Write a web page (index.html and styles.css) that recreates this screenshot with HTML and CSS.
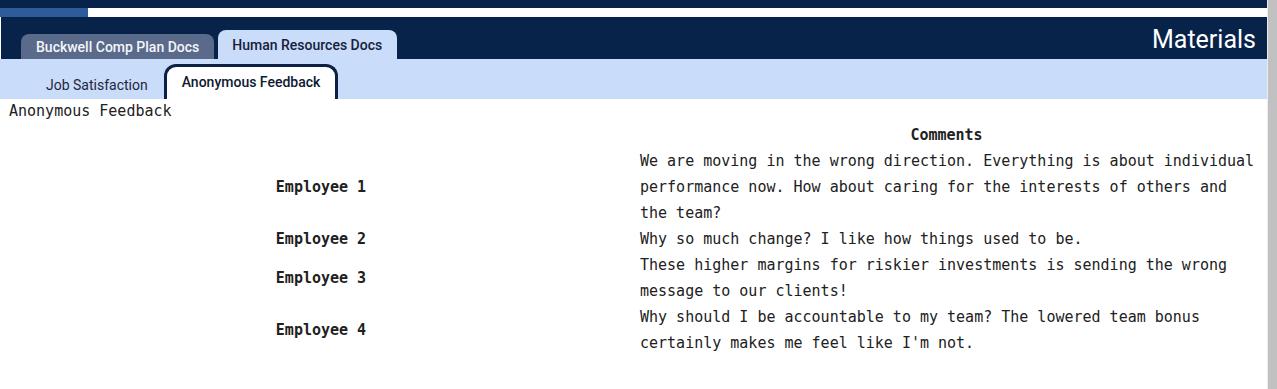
FILE: index.html
```html
<!DOCTYPE html>
<html lang="en">
<head>
    <meta charset="UTF-8">
    <meta name="viewport" content="width=device-width, initial-scale=1.0">
    <title>Materials</title>
    <link rel="stylesheet" href="styles.css">
</head>
<body>
    <div class="page">
        <main class="main">
            <div class="topbar"></div>
            <div class="progress">
                <div class="progress-fill"></div>
            </div>

            <header class="header">
                <div class="tabs">
                    <a class="tab">Buckwell Comp Plan Docs</a>
                    <a class="tab active">Human Resources Docs</a>
                </div>
                <h1 class="title">Materials</h1>
            </header>

            <nav class="subtabs">
                <a class="subtab">Job Satisfaction</a>
                <a class="subtab active">Anonymous Feedback</a>
            </nav>

            <section class="content">
                <div class="doc-title">Anonymous Feedback</div>
                <table class="feedback">
                    <thead>
                        <tr>
                            <th class="name-col"></th>
                            <th class="comment-col">Comments</th>
                        </tr>
                    </thead>
                    <tbody>
                        <tr>
                            <th class="name-col">Employee 1</th>
                            <td class="comment-col">We are moving in the wrong direction. Everything is about individual performance now. How about caring for the interests of others and the team?</td>
                        </tr>
                        <tr>
                            <th class="name-col">Employee 2</th>
                            <td class="comment-col">Why so much change? I like how things used to be.</td>
                        </tr>
                        <tr>
                            <th class="name-col">Employee 3</th>
                            <td class="comment-col">These higher margins for riskier investments is sending the wrong message to our clients!</td>
                        </tr>
                        <tr>
                            <th class="name-col">Employee 4</th>
                            <td class="comment-col">Why should I be accountable to my team? The lowered team bonus certainly makes me feel like I'm not.</td>
                        </tr>
                    </tbody>
                </table>
            </section>
        </main>
        <div class="scrollbar"></div>
    </div>
</body>
</html>
```

FILE: styles.css
```css
body {
    margin: 0;
    font-family: Roboto, "Noto Sans", sans-serif;
    background-color: white;
    color: #212121;
}

.page {
    display: flex;
    height: 389px;
    overflow: hidden;
}

.main {
    flex: 1;
    min-width: 0;
}

.scrollbar {
    width: 9px;
    background-color: #c1c1c1;
    border-left: 1px solid #ececec;
}

.topbar {
    height: 8px;
    background-color: #08234a;
}

.progress {
    height: 9px;
    background-color: white;
}

.progress-fill {
    width: 88px;
    height: 100%;
    background-color: #2d5b9b;
}

.header {
    display: flex;
    align-items: flex-end;
    height: 42px;
    margin-left: 1px;
    background-color: #08234a;
}

.tabs {
    display: flex;
    align-items: flex-end;
    gap: 4px;
    padding-left: 20px;
}

.tab {
    display: block;
    height: 25px;
    line-height: 27px;
    padding: 0 15px;
    border-radius: 8px 8px 0 0;
    background-color: #5a6a8b;
    color: #f4f6fa;
    font-size: 14px;
    font-weight: 500;
}

.tab.active {
    height: 29px;
    line-height: 31px;
    padding: 0 15px 0 14px;
    background-color: #c9dcf9;
    color: #17213a;
}

.title {
    margin: 0 11px 0 auto;
    align-self: center;
    padding-top: 2px;
    font-size: 25px;
    font-weight: 400;
    color: white;
}

.subtabs {
    display: flex;
    align-items: flex-end;
    height: 40px;
    padding-left: 30px;
    background-color: #c9dcf9;
}

.subtab {
    display: block;
    padding: 0 16px;
    height: 30px;
    line-height: 32px;
    font-size: 14px;
    color: #1d2740;
}

.subtab.active {
    height: 32px;
    line-height: 30px;
    padding: 0 15px;
    background-color: white;
    border: 3px solid #0d2146;
    border-bottom: none;
    border-radius: 12px 12px 0 0;
    font-weight: 500;
    color: #0d1a33;
}

.content {
    padding: 2px 8px 0;
    font-family: "DejaVu Sans Mono", "Liberation Mono", monospace;
    font-size: 15px;
}

.doc-title {
    line-height: 21px;
    padding-left: 1px;
}

.feedback {
    width: 100%;
    border-collapse: collapse;
}

.feedback th,
.feedback td {
    padding: 0;
    line-height: 26px;
}

.feedback .name-col {
    width: 626px;
    text-align: center;
}

.feedback .comment-col {
    padding-left: 6px;
    text-align: left;
}

.feedback thead .comment-col {
    padding-left: 0;
    text-align: center;
}
```
